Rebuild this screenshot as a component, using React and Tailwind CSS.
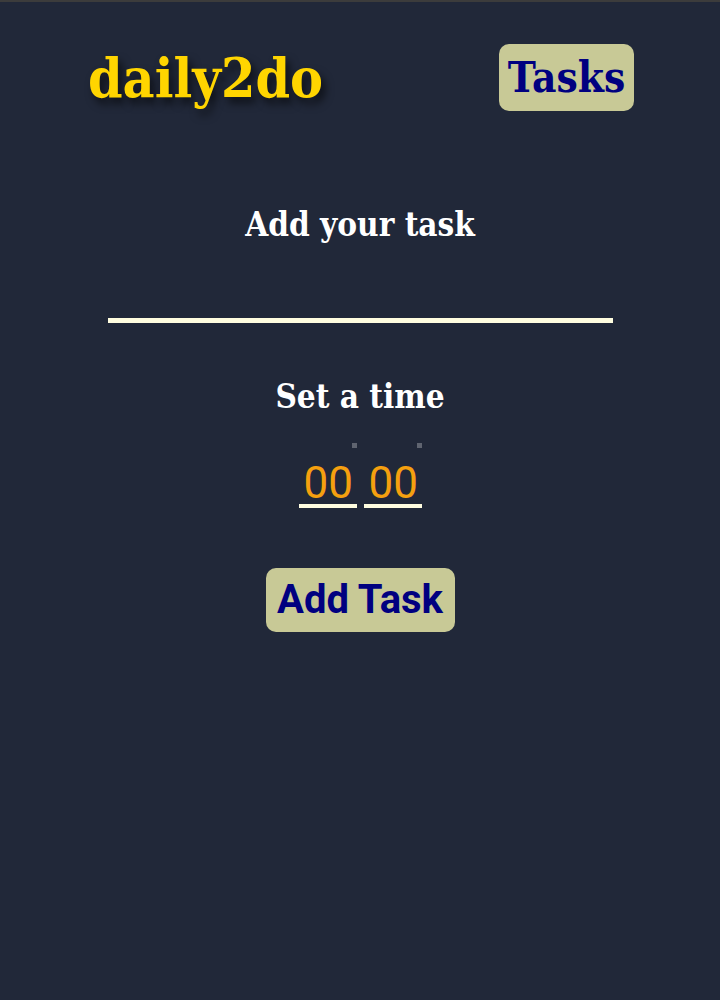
export default function App() {
  return (
    <div className="min-h-[1000px] bg-[#212839] border-t-2 border-[#3c3c3c] font-['DejaVu_Serif_Condensed','DejaVu_Serif',serif]">
      {/* Header */}
      <header className="flex items-center justify-between pl-[88px] pr-[86px] pt-[42px]">
        <h1 className="text-[55px] font-bold leading-none text-[#ffd500] [text-shadow:4px_6px_8px_rgba(0,0,0,0.6)]">
          daily2do
        </h1>
        <button className="h-[67px] w-[135px] rounded-[10px] bg-[#c8c996] text-[42px] font-bold leading-none text-[#000080]">
          Tasks
        </button>
      </header>

      {/* Form */}
      <main className="flex flex-col items-center pt-[97px]">
        <label className="text-[33px] font-bold text-white leading-none">
          Add your task
        </label>
        <input
          type="text"
          className="mt-[53px] w-[505px] border-b-[5px] border-[#fffde0] bg-transparent text-white outline-none"
        />
        <label className="mt-[57px] text-[33px] font-bold text-white leading-none">
          Set a time
        </label>
        <div className="mt-[30px] flex gap-[7px]">
          {["00", "00"].map((v, i) => (
            <div key={i} className="relative w-[58px]">
              <span className="absolute right-[0px] top-0 h-[5px] w-[5px] bg-[#5f6470]"></span>
              <div className="pt-[21px] pl-[5px] font-['Roboto',sans-serif] text-[44px] leading-[0.9] text-[#f5a00f] border-b-[4px] border-[#fffde0]">
                {v}
              </div>
            </div>
          ))}
        </div>
        <button className="mt-[60px] h-[64px] w-[189px] rounded-[10px] bg-[#c8c996] font-['Roboto',sans-serif] text-[40px] font-bold text-[#000080] leading-none">
          Add Task
        </button>
      </main>
    </div>
  );
}
